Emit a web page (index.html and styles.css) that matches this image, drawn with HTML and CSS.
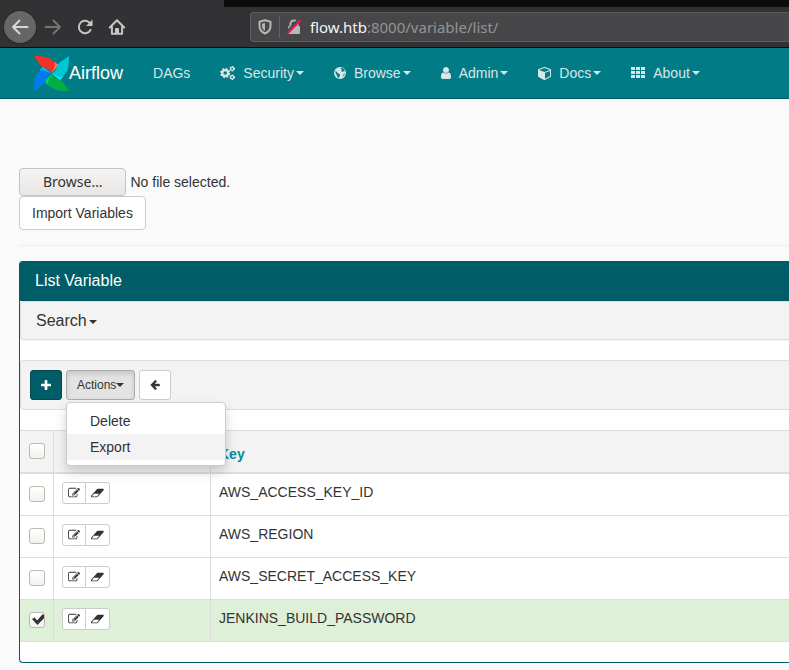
FILE: index.html
```html
<!DOCTYPE html>
<html lang="en">
<head>
<meta charset="utf-8">
<title>List Variable</title>
<link rel="stylesheet" href="styles.css">
</head>
<body>
<svg class="defs" aria-hidden="true">
  <symbol id="edit" viewBox="0 0 1792 1792"><path d="M888 1184l116-116-152-152-116 116v56h96v96h56zm440-720q-16-16-33 1l-350 350q-17 17-1 33t33-1l350-350q17-17 1-33zm80 594v190q0 119-84.5 203.5t-203.5 84.5h-832q-119 0-203.5-84.5t-84.5-203.5v-832q0-119 84.5-203.5t203.5-84.5h832q63 0 117 25 15 7 18 23 3 17-9 29l-49 49q-14 14-32 8-23-6-45-6h-832q-66 0-113 47t-47 113v832q0 66 47 113t113 47h832q66 0 113-47t47-113v-126q0-13 9-22l64-64q15-15 35-7t20 29zm-96-738l288 288-672 672h-288v-288zm444 132l-92 92-288-288 92-92q28-28 68-28t68 28l152 152q28 28 28 68t-28 68z"/></symbol>
  <symbol id="eraser" viewBox="-40 0 1920 1792"><path d="M832 1408l336-384h-768l-336 384h768zm1013-1077q15 34 9.5 71.5t-30.5 65.5l-896 1024q-38 44-96 44h-768q-38 0-69.5-20.5t-47.5-54.5q-15-34-9.5-71.5t30.5-65.5l896-1024q38-44 96-44h768q38 0 69.5 20.5t47.5 54.5z"/></symbol>
</svg>

<header class="chrome">
  <div class="tabs"></div>
  <div class="toolbar">
    <button class="tool back" aria-label="Back"><svg width="18" height="18" viewBox="0 0 18 18"><path class="line" d="M16.500 9H2M8.500 2.500 2 9l6.500 6.500"/></svg></button>
    <button class="tool forward" aria-label="Forward"><svg width="18" height="18" viewBox="0 0 18 18"><path class="line" d="M1.500 9H16M9.500 2.500 16 9l-6.500 6.500"/></svg></button>
    <button class="tool" aria-label="Reload"><svg width="18" height="18" viewBox="0 0 18 18"><path class="line" d="M14.500 12A6.200 6.200 0 1 1 13.200 4.400L15 6"/><path d="M16.500 1.500v6.500H10z"/></svg></button>
    <button class="tool" aria-label="Home"><svg width="18" height="18" viewBox="0 0 18 18"><path class="line" d="M1.800 9.500 9 2.300l7.200 7.200M3.900 9v6.700h10.200V9"/><path d="M7 16v-5q0-1 1-1h2q1 0 1 1v5z"/></svg></button>
    <div class="address">
      <svg width="14" height="16" viewBox="0 0 14 16"><path class="line" d="M7 1.200 12.500 2.700v4.300c0 3.500-2.300 6.100-5.500 7.500C3.800 13.100 1.500 10.500 1.500 7V2.700z"/><path d="M7 4 4 4.800V7c0 2.100 1.100 3.700 3 4.800z"/></svg>
      <span class="divider"></span>
      <svg width="14" height="16" viewBox="0 0 14 16"><path class="line" d="M3.500 8V5a3.500 3.500 0 0 1 7 0v3"/><rect x="1" y="7" width="12" height="8" rx="1"/><path class="gap" d="M-.5 13 12.500-.5"/><path class="slash" d="M.5 14.500 13.500 1"/></svg>
      <span class="url"><b>flow.htb</b>:8000/variable/list/</span>
    </div>
  </div>
</header>

<nav class="navbar">
  <a class="brand" href="#">
    <svg width="35" height="35" viewBox="0 0 104 104">
      <path fill="#ff7557" d="M60 16 73 27 52 52z"/><path fill="#11e1ee" d="M88 60 77 73 52 52z"/><path fill="#04d659" d="M44 88 31 77 52 52z"/><path fill="#0cb6ff" d="M16 44 27 31 52 52z"/>
      <path fill="#ee3426" d="M0 0C34 0 42 4 50 9 58 15 62 20 63 25L52 52C48 40 38 38 28 34 17 29 10 12 0 0z"/>
      <path fill="#00c7d4" d="M0 0C34 0 42 4 50 9 58 15 62 20 63 25L52 52C48 40 38 38 28 34 17 29 10 12 0 0z" transform="rotate(90 52 52)"/>
      <path fill="#00ad46" d="M0 0C34 0 42 4 50 9 58 15 62 20 63 25L52 52C48 40 38 38 28 34 17 29 10 12 0 0z" transform="rotate(180 52 52)"/>
      <path fill="#017cee" d="M0 0C34 0 42 4 50 9 58 15 62 20 63 25L52 52C48 40 38 38 28 34 17 29 10 12 0 0z" transform="rotate(270 52 52)"/>
    </svg>
    <span>Airflow</span>
  </a>
  <a class="item" href="#">DAGs</a>
  <a class="item" href="#"><svg width="15" height="16" viewBox="0 0 16 16"><circle class="hub" cx="5.500" cy="8" r="3.100"/><circle class="teeth" cx="5.500" cy="8" r="4.600"/><circle class="ring" cx="13" cy="3.500" r="1.700"/><circle class="cogs" cx="13" cy="3.500" r="2.400"/><circle class="ring" cx="13" cy="12.500" r="1.700"/><circle class="cogs" cx="13" cy="12.500" r="2.400"/></svg>Security<i class="caret"></i></a>
  <a class="item" href="#"><svg width="12" height="14" viewBox="0 0 12 14"><circle cx="6" cy="7" r="6"/><path class="land" d="M6.200 2.200 8.400 2l1.800 1.500.9 1.700-1.400-.2-.8 1-1-.3-.7-1.200.9-.8-1-.6zM1.200 5.200l1.300.2 1.400 1.800 1.800.8.3 1.600-1.300 2.400-1.300-.8-.3-1.800-1.400-1.800zM9.600 8l1.300-.4-.8 2.200-1 .9z"/></svg>Browse<i class="caret"></i></a>
  <a class="item" href="#"><svg width="10" height="14" viewBox="256 0 1280 1792"><path d="M1536 1399q0 109-62.500 187t-150.500 78h-854q-88 0-150.500-78t-62.500-187q0-85 8.500-160.500t31.500-152 58.500-131 94-89 134.500-34.500q131 128 313 128t313-128q76 0 134.500 34.500t94 89 58.500 131 31.500 152 8.500 160.500zm-256-887q0 159-112.500 271.500t-271.500 112.500-271.500-112.500-112.500-271.500 112.500-271.500 271.500-112.500 271.500 112.500 112.500 271.500z"/></svg>Admin<i class="caret"></i></a>
  <a class="item" href="#"><svg width="13" height="14" viewBox="0 0 1664 1792"><path fill-rule="evenodd" d="M896 1629l640-349v-636l-640 233zM832 764l698-254-698-254-698 254zM1664 512v768q0 35-18 65t-49 47l-704 384q-28 16-61 16t-61-16l-704-384q-31-17-49-47t-18-65v-768q0-40 23-73t61-47l704-256q22-8 44-8t44 8l704 256q38 14 61 47t23 73z"/></svg>Docs<i class="caret"></i></a>
  <a class="item" href="#"><svg width="14" height="14" viewBox="0 0 14 14"><path d="M0 1h4v3H0zM5 1h4v3H5zM10 1h4v3h-4zM0 5h4v3H0zM5 5h4v3H5zM10 5h4v3h-4zM0 9h4v3H0zM5 9h4v3H5zM10 9h4v3h-4z"/></svg>About<i class="caret"></i></a>
</nav>

<main>
  <form class="import">
    <div class="file">
      <input class="file-input" type="file" id="file">
      <label class="file-button" for="file">Browse…</label>
      <span>No file selected.</span>
    </div>
    <button class="btn" type="button">Import Variables</button>
  </form>
  <hr>
  <section class="panel">
    <h1>List Variable</h1>
    <div class="well search"><a href="#">Search<i class="caret"></i></a></div>
    <div class="well actions">
      <button class="btn small primary" aria-label="Add"><svg width="10" height="10" viewBox="192 128 1408 1408"><path d="M1600 736v192q0 40-28 68t-68 28h-416v416q0 40-28 68t-68 28h-192q-40 0-68-28t-28-68v-416h-416q-40 0-68-28t-28-68v-192q0-40 28-68t68-28h416v-416q0-40 28-68t68-28h192q40 0 68 28t28 68v416h416q40 0 68 28t28 68z"/></svg></button>
      <div class="dropdown">
        <button class="btn small open">Actions<i class="caret"></i></button>
        <ul class="menu">
          <li><a href="#">Delete</a></li>
          <li><a class="hover" href="#">Export</a></li>
        </ul>
      </div>
      <button class="btn small" aria-label="Go back"><svg width="10" height="12" viewBox="96 0 1600 1920"><path d="M1664 896v128q0 53-32.500 90.500t-84.500 37.500h-704l293 294q38 36 38 90t-38 90l-75 76q-37 37-90 37-52 0-91-37l-651-652q-37-37-37-90 0-52 37-91l651-650q38-38 91-38 52 0 90 38l75 74q38 38 38 91t-38 91l-293 293h704q52 0 84.500 37.500t32.500 90.500z"/></svg></button>
    </div>
    <table>
      <thead>
        <tr><th class="check"><input type="checkbox" aria-label="Select all"></th><th class="tools"></th><th><a href="#">Key</a></th></tr>
      </thead>
      <tbody>
        <tr><td><input type="checkbox" aria-label="Select AWS_ACCESS_KEY_ID"></td><td><div class="group"><button aria-label="Edit"><svg width="12" height="12"><use href="#edit"/></svg></button><button aria-label="Delete"><svg width="13" height="12"><use href="#eraser"/></svg></button></div></td><td>AWS_ACCESS_KEY_ID</td></tr>
        <tr><td><input type="checkbox" aria-label="Select AWS_REGION"></td><td><div class="group"><button aria-label="Edit"><svg width="12" height="12"><use href="#edit"/></svg></button><button aria-label="Delete"><svg width="13" height="12"><use href="#eraser"/></svg></button></div></td><td>AWS_REGION</td></tr>
        <tr><td><input type="checkbox" aria-label="Select AWS_SECRET_ACCESS_KEY"></td><td><div class="group"><button aria-label="Edit"><svg width="12" height="12"><use href="#edit"/></svg></button><button aria-label="Delete"><svg width="13" height="12"><use href="#eraser"/></svg></button></div></td><td>AWS_SECRET_ACCESS_KEY</td></tr>
        <tr class="selected"><td><input type="checkbox" checked aria-label="Select JENKINS_BUILD_PASSWORD"></td><td><div class="group"><button aria-label="Edit"><svg width="12" height="12"><use href="#edit"/></svg></button><button aria-label="Delete"><svg width="13" height="12"><use href="#eraser"/></svg></button></div></td><td>JENKINS_BUILD_PASSWORD</td></tr>
      </tbody>
    </table>
  </section>
</main>
</body>
</html>
```
FILE: styles.css
```css
* { box-sizing: border-box; }

body {
  margin: 0;
  background: #fafafa;
  color: #333;
  font: 14px/20px "Liberation Sans", Arial, sans-serif;
}

a { color: inherit; text-decoration: none; }
button { font: inherit; color: inherit; }
svg { fill: currentColor; flex: none; display: block; }
.defs { position: absolute; width: 0; height: 0; }
.line { fill: none; stroke: currentColor; stroke-width: 2; stroke-linejoin: round; stroke-linecap: round; }

/* Browser bar */
.chrome { background: #323234; border-bottom: 1px solid #0c0c0d; }
.tabs { height: 7px; margin-left: 224px; background: #0c0c0c; }
.toolbar { display: flex; align-items: center; height: 40px; padding-left: 4px; color: #c6c6c7; }
.tool {
  display: flex;
  align-items: center;
  justify-content: center;
  width: 32px;
  height: 32px;
  padding: 0;
  border: 0;
  background: none;
}
.back { margin-right: 1px; border-radius: 50%; background: #666; box-shadow: 0 0 0 1px #29292a; color: #d8d8d8; }
.forward { color: #747475; }
.address {
  flex: 1;
  display: flex;
  align-items: center;
  height: 30px;
  margin-left: 117px;
  padding-left: 7px;
  border: 1px solid #5e5e60;
  border-right: 0;
  border-radius: 4px 0 0 4px;
  background: #474749;
  color: #b6b6b7;
}
.divider { width: 1px; height: 22px; margin: 0 7px; background: #646466; }
.gap { stroke: #474749; stroke-width: 2; }
.slash { stroke: #f0134d; stroke-width: 2; }
.url { margin-left: 9px; font: 15px/22px "Noto Sans", sans-serif; color: #949495; }
.url b { font-weight: 400; color: #f5f5f5; }

/* Navigation */
.navbar {
  display: flex;
  height: 51px;
  padding-left: 19px;
  background: #017c87;
  border-bottom: 1px solid #005c66;
  color: #d9e6e7;
}
.brand { display: flex; align-items: center; padding: 0 15px; color: #fff; font-size: 18px; }
.item { display: flex; align-items: center; padding: 0 15px; }
.item svg { margin-right: 8px; }
.hub { fill: none; stroke: currentColor; stroke-width: 2.500; }
.teeth { fill: none; stroke: currentColor; stroke-width: 1.800; stroke-dasharray: 2 1.613; }
.ring { fill: none; stroke: currentColor; stroke-width: 1.300; }
.cogs { fill: none; stroke: currentColor; stroke-width: 1.200; stroke-dasharray: 1.300 1.213; }
.land { fill: #017c87; }
.caret {
  display: inline-block;
  margin-left: 2px;
  vertical-align: middle;
  border-top: 4px solid;
  border-left: 4px solid transparent;
  border-right: 4px solid transparent;
}

/* Import form */
main { padding: 69px 0 7px 19px; }
.file { display: flex; align-items: center; gap: 4px; }
.file-input { position: absolute; width: 1px; height: 1px; opacity: 0; }
.file-button {
  padding: 3px 23px;
  border: 1px solid #c8c3be;
  border-radius: 4px;
  background: linear-gradient(#f5f4f3, #e9e7e6);
  font-family: "Noto Sans", sans-serif;
}
.btn {
  display: flex;
  align-items: center;
  justify-content: center;
  padding: 6px 12px;
  border: 1px solid #ccc;
  border-radius: 4px;
  background: #fff;
}
hr { margin: 15px 0; border: 0; border-top: 1px solid #eee; }

/* Variable list */
.panel {
  padding-bottom: 20px;
  border: 1px solid #005c66;
  border-right: 0;
  border-radius: 4px 0 0 4px;
  background: #fff;
}
h1 {
  margin: 0;
  padding: 9px 15px 10px;
  border-radius: 2px 0 0 0;
  background: #005c66;
  color: #fff;
  font-size: 16px;
  font-weight: 400;
}
.well {
  margin-bottom: 20px;
  border: 1px solid #ddd;
  border-right: 0;
  border-radius: 4px 0 0 4px;
  background: #f3f3f3;
}
.search { padding: 9px 15px 8px; font-size: 16px; box-shadow: 0 1px 1px #0000000d; }
.actions { display: flex; gap: 4px; padding: 9px; }
.small { min-width: 32px; height: 30px; padding: 5px 10px; border-radius: 3px; font-size: 12px; }
.small .caret { margin-left: 0; }
.primary { border-color: #004a52; background: #005c66; color: #fff; }
.open { border-color: #adadad; background: #e3e3e3; box-shadow: inset 0 3px 5px #00000020; }
.dropdown { position: relative; }
.menu {
  position: absolute;
  top: 32px;
  left: 0;
  width: 160px;
  margin: 0;
  padding: 5px 0;
  border: 1px solid #ccc;
  border-radius: 4px;
  background: #fff;
  box-shadow: 0 6px 12px #0000002d;
  list-style: none;
}
.menu a { display: block; padding: 3px 23px; }
.menu .hover { background: #f3f3f3; }

table { width: 100%; border-collapse: collapse; border-bottom: 1px solid #ddd; }
th, td { height: 42px; padding: 8px; border-top: 1px solid #ddd; text-align: left; vertical-align: top; }
th { background: #f3f3f3; vertical-align: bottom; color: #018d9c; }
th + th, td + td { border-left: 1px solid #ddd; }
thead tr { border-bottom: 2px solid #ddd; }
tbody tr:first-child td { height: 43px; }
.check { width: 33px; }
.tools { width: 157px; }
.selected { background: #dff0d8; }

input[type="checkbox"] {
  appearance: none;
  display: block;
  width: 16px;
  height: 16px;
  margin: 4px 0 0 1px;
  border: 1px solid #bfb8b1;
  border-radius: 3px;
  background: linear-gradient(#fff, #f2f1f0);
}
th input[type="checkbox"] { margin: 0 0 5px 1px; }
input[type="checkbox"]:checked::before {
  content: "";
  display: block;
  width: 12px;
  height: 11px;
  margin: 1px 0 0 2px;
  background: #2e3436;
  clip-path: polygon(0 45%, 22% 32%, 42% 58%, 90% 0, 100% 12%, 100% 38%, 45% 100%);
}
.group { display: flex; }
.group button {
  display: flex;
  align-items: center;
  justify-content: center;
  width: 24px;
  height: 22px;
  padding: 0;
  border: 1px solid #ccc;
  border-radius: 3px 0 0 3px;
  background: #fff;
}
.group button + button { width: 25px; margin-left: -1px; border-radius: 0 3px 3px 0; }
```
